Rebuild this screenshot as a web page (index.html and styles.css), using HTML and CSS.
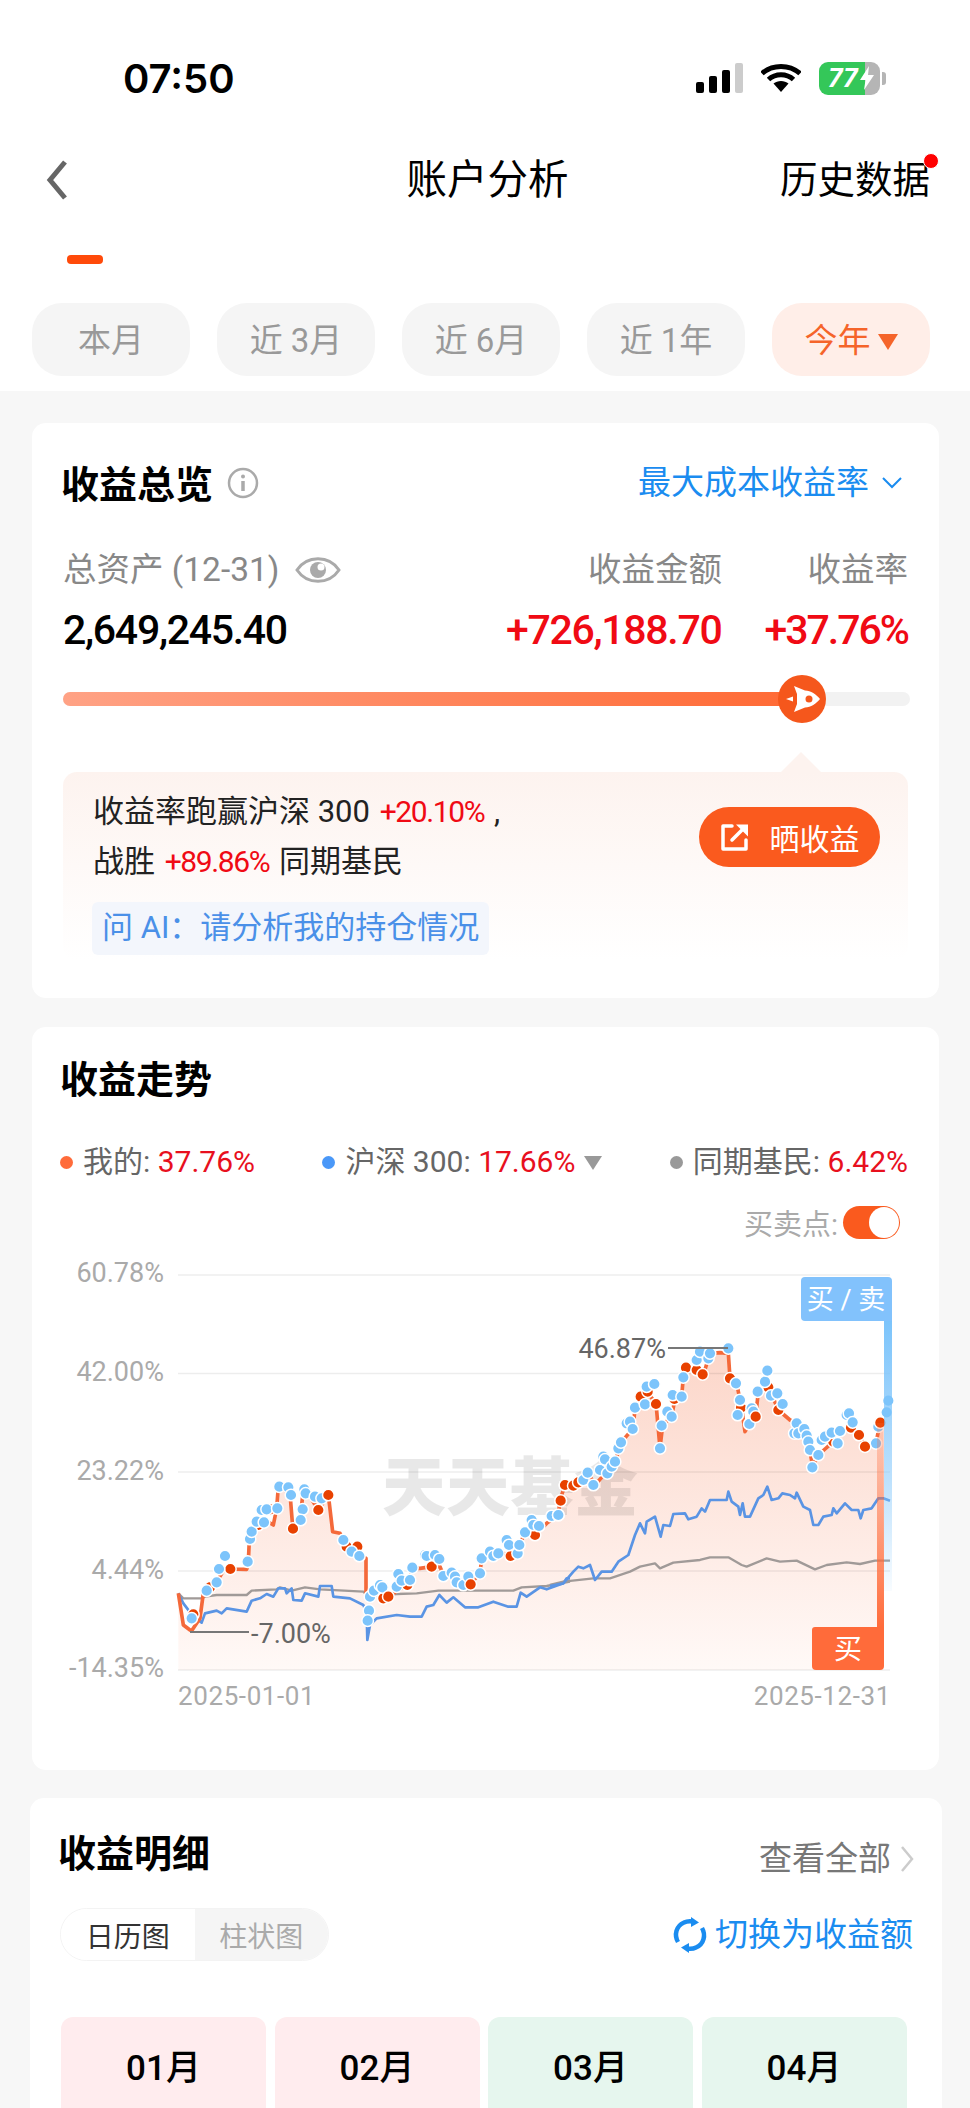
FILE: index.html
```html
<!DOCTYPE html>
<html>
  <head>
    <title>账户分析</title>
    <meta charset="utf-8" />
    <link rel="stylesheet" href="styles.css">
  </head>
  <body>
    <div class="top">
      <div class="status">
        <span class="time">07:50</span>
        <div class="status-icons">
          <div class="signal">
            <i class="bar-1"></i><i class="bar-2"></i><i class="bar-3"></i><i class="bar-4"></i>
          </div>
          <svg class="wifi" width="40" height="30" viewBox="0 0 40 30">
            <path d="M1 10.500C11.500 1 28.500 1 39 10.500M7.500 16.500C14.500 10 25.500 10 32.500 16.500" fill="none" stroke="#000" stroke-width="5" />
            <path d="M12.500 20.500C16.500 17 23.500 17 27.500 20.500L20 29Z" fill="#000" />
          </svg>
          <div class="battery">
            <div class="battery-body">
              <span class="battery-level">77</span>
              <svg class="bolt" width="14" height="24" viewBox="0 0 14 24">
                <path d="M9 0L0 14H5.500L4 24L14 9H8Z" fill="#fff" />
              </svg>
            </div>
            <i class="battery-cap"></i>
          </div>
        </div>
      </div>
      <div class="nav">
        <svg class="back" width="24" height="42" viewBox="0 0 24 42">
          <path d="M20 3L5 21L20 39" fill="none" stroke="#666" stroke-width="5" />
        </svg>
        <div class="nav-title">账户分析</div>
        <div class="nav-link">历史数据<i class="red-dot"></i></div>
      </div>
      <div class="indicator"></div>
      <div class="tabs">
        <div class="tab">本月</div>
        <div class="tab">近 3月</div>
        <div class="tab">近 6月</div>
        <div class="tab">近 1年</div>
        <div class="tab tab-active">今年<i class="tab-caret"></i></div>
      </div>
    </div>

    <div class="main">
      <div class="card card-overview">
        <div class="card-head">
          <div class="head-left">
            <h2 class="card-title">收益总览</h2>
            <svg class="info" width="32" height="32" viewBox="0 0 32 32">
              <circle cx="16" cy="16" r="14" fill="none" stroke="#aaa" stroke-width="2.500" />
              <circle cx="16" cy="9.500" r="2" fill="#aaa" />
              <path d="M16 14V24" stroke="#aaa" stroke-width="3.500" />
            </svg>
          </div>
          <div class="rate-select">
            最大成本收益率
            <svg width="22" height="14" viewBox="0 0 22 14">
              <path d="M2 2L11 11L20 2" fill="none" stroke="#1a8cf0" stroke-width="2" />
            </svg>
          </div>
        </div>

        <div class="figures">
          <div class="figure-label figure-first">
            总资产 (12-31)
            <svg width="46" height="32" viewBox="0 0 46 32">
              <path d="M2 16C12 1 34 1 44 16C34 31 12 31 2 16Z" fill="none" stroke="#aaa" stroke-width="3" />
              <circle cx="23" cy="16" r="8" fill="#aaa" />
              <circle cx="26" cy="13" r="3.500" fill="#fff" />
            </svg>
          </div>
          <div class="figure-label figure-profit">收益金额</div>
          <div class="figure-label">收益率</div>
          <div class="figure-value figure-first">2,649,245.40</div>
          <div class="figure-value text-red">+726,188.70</div>
          <div class="figure-value text-red figure-pct">+37.76%</div>
        </div>

        <div class="slider">
          <div class="slider-fill"></div>
          <div class="slider-knob">
            <svg width="48" height="48" viewBox="0 0 48 48">
              <path d="M42 24C38 19 33 16 27 15.500L16 11L19 19V29L16 37L27 32.500C33 32 38 29 42 24Z" fill="#fff" />
              <circle cx="31" cy="24" r="3.500" fill="#f5571c" />
              <path d="M8 24L15 21.500V26.500Z" fill="#fff" />
            </svg>
          </div>
        </div>

        <div class="tip">
          <div class="tip-text">
            <div class="tip-line">收益率跑赢沪深 300 <span class="tip-num">+20.10%</span> ,</div>
            <div class="tip-line">战胜 <span class="tip-num">+89.86%</span> 同期基民</div>
            <div class="ask-ai">问 AI：请分析我的持仓情况</div>
          </div>
          <div class="share-btn">
            <svg width="30" height="30" viewBox="0 0 30 30">
              <path d="M12 4H3V27H26V18" fill="none" stroke="#fff" stroke-width="3.500" stroke-linejoin="round" stroke-linecap="round" />
              <path d="M12 18L24 6" stroke="#fff" stroke-width="3.500" stroke-linecap="round" />
              <path d="M16 2.500H28V14.500Z" fill="#fff" />
            </svg>
            晒收益
          </div>
        </div>
      </div>

      <div class="card card-trend">
        <h2 class="card-title">收益走势</h2>
        <div class="legend">
          <div class="legend-item"><i class="dot dot-mine"></i>我的: <span class="legend-num">37.76%</span></div>
          <div class="legend-item"><i class="dot dot-index"></i>沪深 300: <span class="legend-num">17.66%</span><i class="legend-caret"></i></div>
          <div class="legend-item"><i class="dot dot-peer"></i>同期基民: <span class="legend-num">6.42%</span></div>
        </div>
        <div class="points-row">
          买卖点:
          <div class="toggle"><i class="toggle-thumb"></i></div>
        </div>

        <svg class="chart" width="907" height="470" viewBox="32 1250 907 470">
          <defs>
            <linearGradient id="areaFill" gradientUnits="userSpaceOnUse" x1="0" y1="300" x2="0" y2="1260">
              <stop offset="0" stop-color="#fcd6c9" />
              <stop offset="1" stop-color="#fff9f7" />
            </linearGradient>
            <linearGradient id="sellBar" x1="0" y1="0" x2="0" y2="1">
              <stop offset="0" stop-color="#7cc4fb" />
              <stop offset="0.600" stop-color="#7cc4fb" stop-opacity="0.500" />
              <stop offset="1" stop-color="#7cc4fb" stop-opacity="0.050" />
            </linearGradient>
            <linearGradient id="buyBar" x1="0" y1="0" x2="0" y2="1">
              <stop offset="0" stop-color="#ff6b3a" stop-opacity="0.200" />
              <stop offset="1" stop-color="#ff6b3a" />
            </linearGradient>
          </defs>

          <!-- left part, coordinates are 3x from x=150 y=1250 -->
          <g transform="translate(150 1250) scale(0.33333)">
            <path fill="url(#areaFill)" d="M85 1030L100 1125L120 1140L125 1142L150 1105L160 1030L180 1012L200 995L225 955L240 957L290 958L295 935L298 870L320 820L345 810L370 825L380 775L385 710L420 730L428 830L450 810L460 720L480 740L505 780L535 735L548 845L570 850L590 890L620 890L628 918L648 925L648 1030L655 1030L660 1040L690 1010L715 1040L770 1005L790 955L810 955L845 950L870 950L880 975L960 1003L990 970L995 925L1040 905L1080 915L1110 885L1125 845L1155 855L1190 820L1225 795V1260H85Z" />
          </g>
          <!-- right part, 3x from x=550 y=1250 -->
          <g transform="translate(550 1250) scale(0.33333)">
            <path fill="url(#areaFill)" d="M20 800L30 750L45 705L85 695L115 670L135 705L170 665L195 635L215 575L250 535L255 470L290 425L318 460L330 595L338 525L365 500L375 445L395 440L400 380L410 350L440 360L460 375L480 310L510 308L535 310L540 385L560 400L570 450L575 475L585 545L600 520L617 500L625 425L655 410L685 480L720 510L740 520L775 575L788 650L805 615L850 575L870 545L900 530L928 555L945 590L978 580L990 518L1000 518V1260H20Z" />
          </g>

          <g class="grid">
            <path d="M178 1275H890M178 1373.500H890M178 1472H890M178 1571H890M178 1670H890" />
          </g>
          <text class="watermark" x="382" y="1510">天天基金</text>

          <g transform="translate(150 1250) scale(0.33333)">
            <path class="line line-peer" d="M85 1030L100 1045L155 1045L165 1040L200 1035L290 1035L305 1022L380 1018L390 1012L425 1022L465 1012L510 1018L640 1025L655 1040L740 1032L800 1030L865 1022L1000 1022L1090 1022L1115 1012L1190 1008L1260 995" />
            <path class="line line-index" d="M85 1030L100 1060L130 1100L155 1118L165 1090L200 1082L215 1090L230 1075L290 1085L305 1052L330 1045L350 1032L370 1040L385 1015L405 1015L410 1030L425 1015L430 1050L455 1052L465 1030L505 1040L510 1008L545 1008L550 1040L600 1045L640 1065L650 1090L652 1170L660 1125L680 1105L740 1095L780 1100L815 1100L830 1070L850 1065L868 1035L890 1058L910 1042L945 1072L985 1072L1030 1055L1075 1070L1100 1070L1112 1028L1130 1040L1170 1012L1190 1018L1240 1000L1250 985L1260 985" />
            <path class="line line-mine" d="M85 1030L100 1125L120 1140L125 1142L150 1105L160 1030L180 1012L200 995L225 955L240 957L290 958L295 935L298 870L320 820L345 810L370 825L380 775L385 710L420 730L428 830L450 810L460 720L480 740L505 780L535 735L548 845L570 850L590 890L620 890L628 918L648 925L648 1030L655 1030L660 1040L690 1010L715 1040L770 1005L790 955L810 955L845 950L870 950L880 975L960 1003L990 970L995 925L1040 905L1080 915L1110 885L1125 845L1155 855L1190 820L1225 795" />
            <g class="dots dots-buy">
              <circle cx="130" cy="1093" /><circle cx="180" cy="1012" /><circle cx="241" cy="957" /><circle cx="325" cy="825" /><circle cx="360" cy="778" /><circle cx="429" cy="836" />
              <circle cx="590" cy="890" /><circle cx="622" cy="890" /><circle cx="700" cy="1045" /><circle cx="772" cy="1005" /><circle cx="845" cy="950" />
              <circle cx="1082" cy="918" /><circle cx="1155" cy="855" /><circle cx="1232" cy="752" /><circle cx="1245" cy="705" />
            </g>
            <g class="dots dots-sell">
              <circle cx="125" cy="1105" /><circle cx="170" cy="1022" /><circle cx="200" cy="997" /><circle cx="207" cy="957" /><circle cx="225" cy="918" /><circle cx="293" cy="935" />
              <circle cx="300" cy="867" /><circle cx="305" cy="845" /><circle cx="320" cy="815" /><circle cx="335" cy="780" /><circle cx="350" cy="778" /><circle cx="342" cy="817" />
              <circle cx="382" cy="775" /><circle cx="388" cy="710" /><circle cx="415" cy="712" /><circle cx="423" cy="735" /><circle cx="463" cy="718" /><circle cx="467" cy="730" />
              <circle cx="495" cy="740" /><circle cx="515" cy="745" /><circle cx="458" cy="778" /><circle cx="452" cy="810" /><circle cx="580" cy="870" /><circle cx="605" cy="905" />
              <circle cx="628" cy="918" /><circle cx="657" cy="1082" /><circle cx="653" cy="1112" /><circle cx="660" cy="1040" /><circle cx="672" cy="1022" /><circle cx="690" cy="1005" />
              <circle cx="697" cy="1012" /><circle cx="745" cy="972" /><circle cx="740" cy="1010" /><circle cx="755" cy="992" /><circle cx="780" cy="990" /><circle cx="787" cy="953" />
              <circle cx="825" cy="915" /><circle cx="830" cy="918" /><circle cx="855" cy="915" /><circle cx="868" cy="927" /><circle cx="880" cy="978" /><circle cx="905" cy="968" />
              <circle cx="915" cy="980" /><circle cx="920" cy="997" /><circle cx="940" cy="1005" /><circle cx="955" cy="980" /><circle cx="990" cy="970" /><circle cx="995" cy="925" />
              <circle cx="1020" cy="905" /><circle cx="1030" cy="918" /><circle cx="1045" cy="910" /><circle cx="1070" cy="870" /><circle cx="1077" cy="885" /><circle cx="1103" cy="910" />
              <circle cx="1108" cy="885" /><circle cx="1125" cy="847" /><circle cx="1145" cy="810" /><circle cx="1150" cy="825" /><circle cx="1167" cy="828" /><circle cx="1205" cy="798" />
              <circle cx="1225" cy="795" />
            </g>
            <g class="dots dots-buy">
              <circle cx="505" cy="780" /><circle cx="535" cy="735" /><circle cx="715" cy="1040" /><circle cx="962" cy="1003" />
            </g>
          </g>

          <g transform="translate(550 1250) scale(0.33333)">
            <path class="line line-peer" d="M0 1005L40 995L130 985L180 985L240 965L270 950L315 940L330 955L370 938L450 930L480 922L535 922L575 945L590 950L650 925L690 935L740 932L795 958L830 945L890 937L930 942L975 932L1020 932" />
            <path class="line line-index" d="M0 1008L40 1000L70 965L85 950L100 955L120 945L135 990L155 965L185 965L205 935L235 915L255 855L270 820L285 850L290 815L315 800L332 860L340 825L360 828L370 792L405 790L415 808L440 800L455 775L465 785L480 750L530 750L535 725L545 755L565 770L570 795L578 760L585 800L600 800L625 745L640 735L652 710L665 750L685 745L697 730L720 735L735 745L740 728L760 770L780 780L790 825L805 825L820 800L845 795L850 775L860 790L885 760L905 780L925 780L932 805L940 780L965 775L985 745L1000 745L1020 752" />
            <path class="line line-mine" d="M25 795L30 750L45 705L85 695L115 670L135 705L170 665L195 635L215 575L250 535L255 470L290 425L318 460L330 595L338 525L365 500L375 445L395 440L400 380L410 350L440 360L460 375L480 310L510 308L535 310L540 385L560 400L570 450L575 475L585 545L600 520L617 500L625 425L655 410L685 480L720 510L740 520L775 575L788 650L805 615L850 575L870 545L900 530L928 555L945 590L978 580L990 518" />
            <g class="dots dots-buy">
              <circle cx="32" cy="752" /><circle cx="45" cy="705" /><circle cx="70" cy="707" /><circle cx="85" cy="697" /><circle cx="272" cy="440" /><circle cx="293" cy="425" />
              <circle cx="373" cy="447" /><circle cx="408" cy="353" /><circle cx="440" cy="360" /><circle cx="540" cy="385" /><circle cx="573" cy="473" /><circle cx="655" cy="412" />
              <circle cx="685" cy="480" /><circle cx="850" cy="575" /><circle cx="903" cy="533" />
            </g>
            <g class="dots dots-sell">
              <circle cx="25" cy="795" /><circle cx="100" cy="690" /><circle cx="130" cy="705" /><circle cx="113" cy="668" /><circle cx="150" cy="660" /><circle cx="160" cy="620" />
              <circle cx="165" cy="628" /><circle cx="172" cy="670" /><circle cx="185" cy="650" /><circle cx="195" cy="635" /><circle cx="205" cy="595" /><circle cx="213" cy="577" />
              <circle cx="230" cy="520" /><circle cx="240" cy="515" /><circle cx="248" cy="537" /><circle cx="255" cy="473" /><circle cx="285" cy="463" /><circle cx="290" cy="410" />
              <circle cx="313" cy="402" /><circle cx="330" cy="595" /><circle cx="335" cy="527" /><circle cx="352" cy="485" /><circle cx="365" cy="500" /><circle cx="368" cy="435" />
              <circle cx="395" cy="440" /><circle cx="400" cy="382" /><circle cx="440" cy="330" /><circle cx="450" cy="305" /><circle cx="475" cy="325" /><circle cx="480" cy="310" />
              <circle cx="535" cy="295" /><circle cx="558" cy="400" /><circle cx="570" cy="450" /><circle cx="563" cy="495" /><circle cx="598" cy="522" /><circle cx="605" cy="475" />
              <circle cx="610" cy="485" /><circle cx="623" cy="425" /><circle cx="645" cy="395" /><circle cx="652" cy="362" /><circle cx="663" cy="437" /><circle cx="682" cy="430" />
              <circle cx="698" cy="462" /><circle cx="733" cy="550" /><circle cx="740" cy="520" /><circle cx="745" cy="550" /><circle cx="763" cy="537" /><circle cx="770" cy="557" />
              <circle cx="775" cy="575" /><circle cx="780" cy="600" /><circle cx="787" cy="652" /><circle cx="805" cy="615" /><circle cx="815" cy="570" /><circle cx="825" cy="560" />
              <circle cx="845" cy="548" /><circle cx="863" cy="580" /><circle cx="870" cy="543" /><circle cx="890" cy="495" /><circle cx="897" cy="490" /><circle cx="908" cy="517" />
              <circle cx="978" cy="580" /><circle cx="985" cy="530" /><circle cx="1010" cy="487" /><circle cx="1015" cy="452" />
            </g>
            <g class="dots dots-buy">
              <circle cx="318" cy="462" /><circle cx="458" cy="373" /><circle cx="617" cy="500" /><circle cx="927" cy="555" /><circle cx="945" cy="590" /><circle cx="991" cy="518" />
            </g>
          </g>

          <!-- today markers -->
          <rect x="884" y="1321" width="8" height="270" fill="url(#sellBar)" />
          <rect x="877" y="1423" width="7" height="205" fill="url(#buyBar)" />
          <path class="tag-sell" d="M805 1277H888Q892 1277 892 1281V1321H805Q801 1321 801 1317V1281Q801 1277 805 1277Z" />
          <path class="tag-buy" d="M815 1627H884V1666Q884 1670 880 1670H816Q812 1670 812 1666V1630Q812 1627 815 1627Z" />
          <text class="tag-text" x="846" y="1309">买 / 卖</text>
          <text class="tag-text tag-text-buy" x="848" y="1659">买</text>

          <path class="callout" d="M668 1348H728M190 1632H249" />
          <text class="callout-text" x="666" y="1358" text-anchor="end">46.87%</text>
          <text class="callout-text" x="251" y="1643">-7.00%</text>

          <text class="axis" x="164" y="1282" text-anchor="end">60.78%</text>
          <text class="axis" x="164" y="1381" text-anchor="end">42.00%</text>
          <text class="axis" x="164" y="1480" text-anchor="end">23.22%</text>
          <text class="axis" x="164" y="1579" text-anchor="end">4.44%</text>
          <text class="axis" x="164" y="1677" text-anchor="end">-14.35%</text>
          <text class="axis axis-date" x="178" y="1705">2025-01-01</text>
          <text class="axis axis-date" x="891" y="1705" text-anchor="end">2025-12-31</text>
        </svg>
      </div>

      <div class="card card-detail">
        <div class="detail-head">
          <h2 class="card-title">收益明细</h2>
          <div class="see-all">
            查看全部
            <svg width="16" height="28" viewBox="0 0 16 28">
              <path d="M3 2L13 14L3 26" fill="none" stroke="#ccc" stroke-width="2.500" />
            </svg>
          </div>
        </div>
        <div class="detail-tools">
          <div class="segment">
            <div class="segment-item segment-active">日历图</div>
            <div class="segment-item">柱状图</div>
          </div>
          <div class="switch-link">
            <svg width="36" height="36" viewBox="0 0 36 36">
              <path d="M6 25C2 18 4 9 12 5.500C15 4 18 4 21 4.500" fill="none" stroke="#1a8cf0" stroke-width="4.500" />
              <path d="M19 0L27 5.500L19 10Z" fill="#1a8cf0" />
              <path d="M30 11C34 18 32 27 24 30.500C21 32 18 32 15 31.500" fill="none" stroke="#1a8cf0" stroke-width="4.500" />
              <path d="M17 36L9 30.500L17 26Z" fill="#1a8cf0" />
            </svg>
            切换为收益额
          </div>
        </div>
        <div class="months">
          <div class="month month-up">01月</div>
          <div class="month month-up">02月</div>
          <div class="month month-down">03月</div>
          <div class="month month-down">04月</div>
        </div>
      </div>
    </div>
  </body>
</html>
```

FILE: styles.css
```css
body {
  margin: 0;
  width: 970px;
  height: 2108px;
  overflow: hidden;
  background: #f7f7f7;
  color: #000;
  font-family: Roboto, "Noto Sans CJK SC", sans-serif;
}

i {
  display: block;
}

h2 {
  margin: 0;
}

.text-red {
  color: #f00a14;
}

/* Top bar */

.top {
  background: #fff;
  height: 391px;
}

.status {
  height: 156px;
  padding: 0 84px 0 123px;
  display: flex;
  align-items: center;
  justify-content: space-between;
}

.time {
  font-family: Inter, sans-serif;
  font-size: 40px;
  font-weight: 600;
}

.status-icons {
  display: flex;
  align-items: center;
}

.signal {
  display: flex;
  align-items: flex-end;
  gap: 5px;
  height: 30px;
}

.signal i {
  width: 8px;
  background: #000;
  border-radius: 2px;
}

.signal .bar-1 {
  height: 11px;
}

.signal .bar-2 {
  height: 17px;
}

.signal .bar-3 {
  height: 23px;
}

.signal .bar-4 {
  height: 30px;
  background: #ccc;
}

.wifi {
  margin: 0 18px;
}

.battery {
  display: flex;
  align-items: center;
  gap: 2px;
}

.battery-body {
  width: 61px;
  height: 33px;
  border-radius: 9px;
  background: linear-gradient(90deg, #34c759 75%, #b5b5b5 75%);
  display: flex;
  align-items: center;
  padding-left: 9px;
  box-sizing: border-box;
  color: #fff;
  font-family: Inter, sans-serif;
  font-size: 25px;
  font-weight: 700;
  font-style: italic;
}

.bolt {
  margin-left: 2px;
}

.battery-cap {
  width: 4px;
  height: 13px;
  border-radius: 0 3px 3px 0;
  background: #b5b5b5;
}

.nav {
  display: grid;
  grid-template-columns: 1fr auto 1fr;
  align-items: center;
  height: 48px;
  padding: 0 40px 0 45px;
  line-height: 48px;
}

.nav-title {
  font-size: 40.500px;
}

.nav-link {
  position: relative;
  justify-self: end;
  font-size: 37.500px;
}

.red-dot {
  position: absolute;
  top: -3px;
  right: -9px;
  width: 14px;
  height: 14px;
  border-radius: 50%;
  background: #f00;
  border: 1px solid #fff;
}

.indicator {
  width: 36px;
  height: 9px;
  margin: 51px 0 39px 67px;
  border-radius: 4px;
  background: #ff4a0a;
}

.tabs {
  display: flex;
  gap: 27px;
  padding-left: 32px;
}

.tab {
  width: 158px;
  height: 73px;
  padding-bottom: 4px;
  box-sizing: border-box;
  border-radius: 30px;
  background: #f5f5f5;
  color: #999;
  font-size: 33px;
  display: flex;
  align-items: center;
  justify-content: center;
}

.tab-active {
  background: #ffeee8;
  color: #f5642a;
}

.tab-caret {
  margin: 8px 0 0 7px;
  border-top: 16px solid #f5642a;
  border-left: 10px solid transparent;
  border-right: 10px solid transparent;
}

/* Cards */

.main {
  padding: 32px 31px 0 32px;
}

.card {
  background: #fff;
  border-radius: 14px;
  box-sizing: border-box;
}

.card-title {
  padding-top: 4px;
  font-size: 38px;
  font-weight: 700;
  line-height: 46px;
}

.card-overview {
  height: 575px;
  padding: 35px 31px 0;
}

.card-overview .card-title {
  margin-left: -2px;
}

.card-head {
  display: flex;
  align-items: center;
  justify-content: space-between;
  height: 50px;
}

.head-left {
  display: flex;
  align-items: center;
  gap: 14px;
}

.rate-select {
  display: flex;
  align-items: center;
  gap: 12px;
  margin-right: 5px;
  padding-bottom: 1px;
  color: #1a8cf0;
  font-size: 33px;
  line-height: 40px;
}

.figures {
  display: grid;
  grid-template-columns: 1fr 214px 188px;
  margin-top: 40px;
}

.figure-label {
  color: #888;
  font-size: 33.500px;
  line-height: 44px;
  text-align: right;
}

.figure-profit {
  margin-right: -2px;
}

.figure-value {
  font-size: 41px;
  font-weight: 500;
  line-height: 50px;
  margin-top: 13px;
  letter-spacing: -1.300px;
  text-align: right;
}

.figure-pct {
  letter-spacing: -2px;
}

.figure-first {
  text-align: left;
}

div.figure-label.figure-first {
  display: flex;
  align-items: center;
  gap: 15px;
}

.slider {
  position: relative;
  height: 14px;
  margin: 37px -2px 0 0;
  border-radius: 7px;
  background: #f2f2f2;
}

.slider-fill {
  width: 730px;
  height: 14px;
  border-radius: 7px;
  background: linear-gradient(90deg, #ffa285, #ff6a35);
}

.slider-knob {
  position: absolute;
  left: 715px;
  top: -17px;
  width: 48px;
  height: 48px;
  border-radius: 50%;
  background: #f5571c;
}

.tip {
  position: relative;
  height: 188px;
  margin-top: 66px;
  padding: 15px 28px 0 30px;
  box-sizing: border-box;
  border-radius: 14px;
  background: linear-gradient(180deg, #fdf3ef, #fff);
  display: flex;
  justify-content: space-between;
  align-items: flex-start;
}

.tip::before {
  content: "";
  position: absolute;
  left: 718px;
  top: -20px;
  border-bottom: 20px solid #fdf3ef;
  border-left: 20px solid transparent;
  border-right: 20px solid transparent;
}

.tip-line {
  font-size: 31px;
  line-height: 50px;
  color: #222;
}

.tip-num {
  margin: 0 2px;
  color: #f00a14;
  font-size: 30px;
  letter-spacing: -1.400px;
}

.ask-ai {
  width: 397px;
  height: 53px;
  margin: 15px 0 0 -1px;
  box-sizing: border-box;
  padding-left: 10px;
  border-radius: 6px;
  background: #f3f6fc;
  color: #4a90e8;
  font-size: 31px;
  line-height: 51px;
  white-space: nowrap;
}

.share-btn {
  width: 181px;
  height: 60px;
  margin-top: 20px;
  border-radius: 30px;
  background: #fa5a1e;
  color: #fff;
  font-size: 30px;
  display: flex;
  align-items: center;
  justify-content: center;
  gap: 20px;
}

.card-trend {
  height: 743px;
  margin-top: 29px;
  padding: 26px 31px 0 28px;
}

.card-trend .card-title {
  margin-left: 0;
}

.legend {
  display: flex;
  justify-content: space-between;
  margin-top: 39px;
  color: #666;
  font-size: 30px;
  line-height: 40px;
}

.legend-item {
  display: flex;
  align-items: center;
  white-space: pre;
}

.legend-num {
  color: #e8101e;
}

.dot {
  width: 13px;
  height: 13px;
  margin-right: 10px;
  border-radius: 50%;
}

.dot-mine {
  background: #ff6b3a;
}

.dot-index {
  background: #4a98f8;
}

.dot-peer {
  background: #999;
}

.legend-caret {
  margin: 2px 0 0 9px;
  border-top: 14px solid #999;
  border-left: 9px solid transparent;
  border-right: 9px solid transparent;
}

.points-row {
  display: flex;
  align-items: center;
  justify-content: flex-end;
  gap: 5px;
  height: 34px;
  margin-top: 23px;
  color: #aaa;
  font-size: 29px;
  padding-right: 8px;
}

.toggle {
  width: 57px;
  height: 33px;
  box-sizing: border-box;
  padding: 1px;
  border-radius: 17px;
  background: #fa5a1e;
  display: flex;
  justify-content: flex-end;
}

.toggle-thumb {
  width: 30px;
  height: 31px;
  border-radius: 50%;
  background: #fff;
}

/* Chart */

.chart {
  display: block;
  margin: 11px 0 0 -28px;
}

.grid path {
  fill: none;
  stroke: #000;
  stroke-opacity: 0.070;
  stroke-width: 1.500;
}

.watermark {
  fill: #000;
  fill-opacity: 0.090;
  font-family: "Noto Sans CJK SC", sans-serif;
  font-size: 64px;
  font-weight: 900;
}

.line {
  fill: none;
  stroke-linejoin: round;
}

.line-peer {
  stroke: #a09a98;
  stroke-width: 7;
}

.line-index {
  stroke: #5a94e4;
  stroke-width: 8;
}

.line-mine {
  stroke: #f4693a;
  stroke-width: 11;
}

.dots circle {
  r: 17.500px;
  stroke: #fff;
  stroke-width: 4.500;
}

.dots-buy circle {
  fill: #e84100;
}

.dots-sell circle {
  fill: #7cc4fb;
}

.tag-sell {
  fill: #82c2fc;
}

.tag-buy {
  fill: #ff6b3a;
}

.tag-text {
  fill: #fff;
  font-size: 27px;
  text-anchor: middle;
}

.tag-text-buy {
  font-size: 28px;
}

.callout {
  fill: none;
  stroke: #777;
  stroke-width: 2;
}

.callout-text {
  fill: #666;
  font-size: 27px;
}

.axis {
  fill: #aaa;
  font-size: 27px;
}

.axis-date {
  font-size: 26px;
  letter-spacing: 0.600px;
}

/* Detail */

.card-detail {
  height: 400px;
  margin: 28px -3px 0 -2px;
  padding: 29px 27px 0 28px;
}

.detail-head {
  display: flex;
  align-items: center;
  justify-content: space-between;
  height: 50px;
}

.see-all {
  display: flex;
  align-items: center;
  gap: 8px;
  margin-top: 13px;
  color: #777;
  font-size: 33px;
  line-height: 45px;
}

.detail-tools {
  display: flex;
  align-items: center;
  justify-content: space-between;
  height: 53px;
  margin-top: 31px;
  padding: 0 2px 0 1px;
}

.segment {
  display: flex;
  width: 269px;
  height: 53px;
  margin-left: 1px;
  box-sizing: border-box;
  border: 1px solid #f3f3f3;
  border-radius: 27px;
  overflow: hidden;
  font-size: 28px;
}

.segment-item {
  flex: 1;
  display: flex;
  align-items: center;
  justify-content: center;
  background: #f5f5f5;
  color: #aaa;
}

.segment-active {
  background: #fff;
  color: #333;
}

.switch-link {
  display: flex;
  align-items: center;
  gap: 7px;
  color: #1a8cf0;
  font-size: 33px;
  line-height: 44px;
}

.months {
  display: grid;
  grid-template-columns: repeat(4, 205px);
  gap: 8.500px;
  margin: 56px 0 0 3px;
}

.month {
  height: 120px;
  padding-top: 30px;
  box-sizing: border-box;
  border-radius: 12px 12px 0 0;
  font-size: 35px;
  font-weight: 500;
  line-height: 44px;
  text-align: center;
}

.month-up {
  background: #ffecee;
}

.month-down {
  background: #e6f6ee;
}
```
